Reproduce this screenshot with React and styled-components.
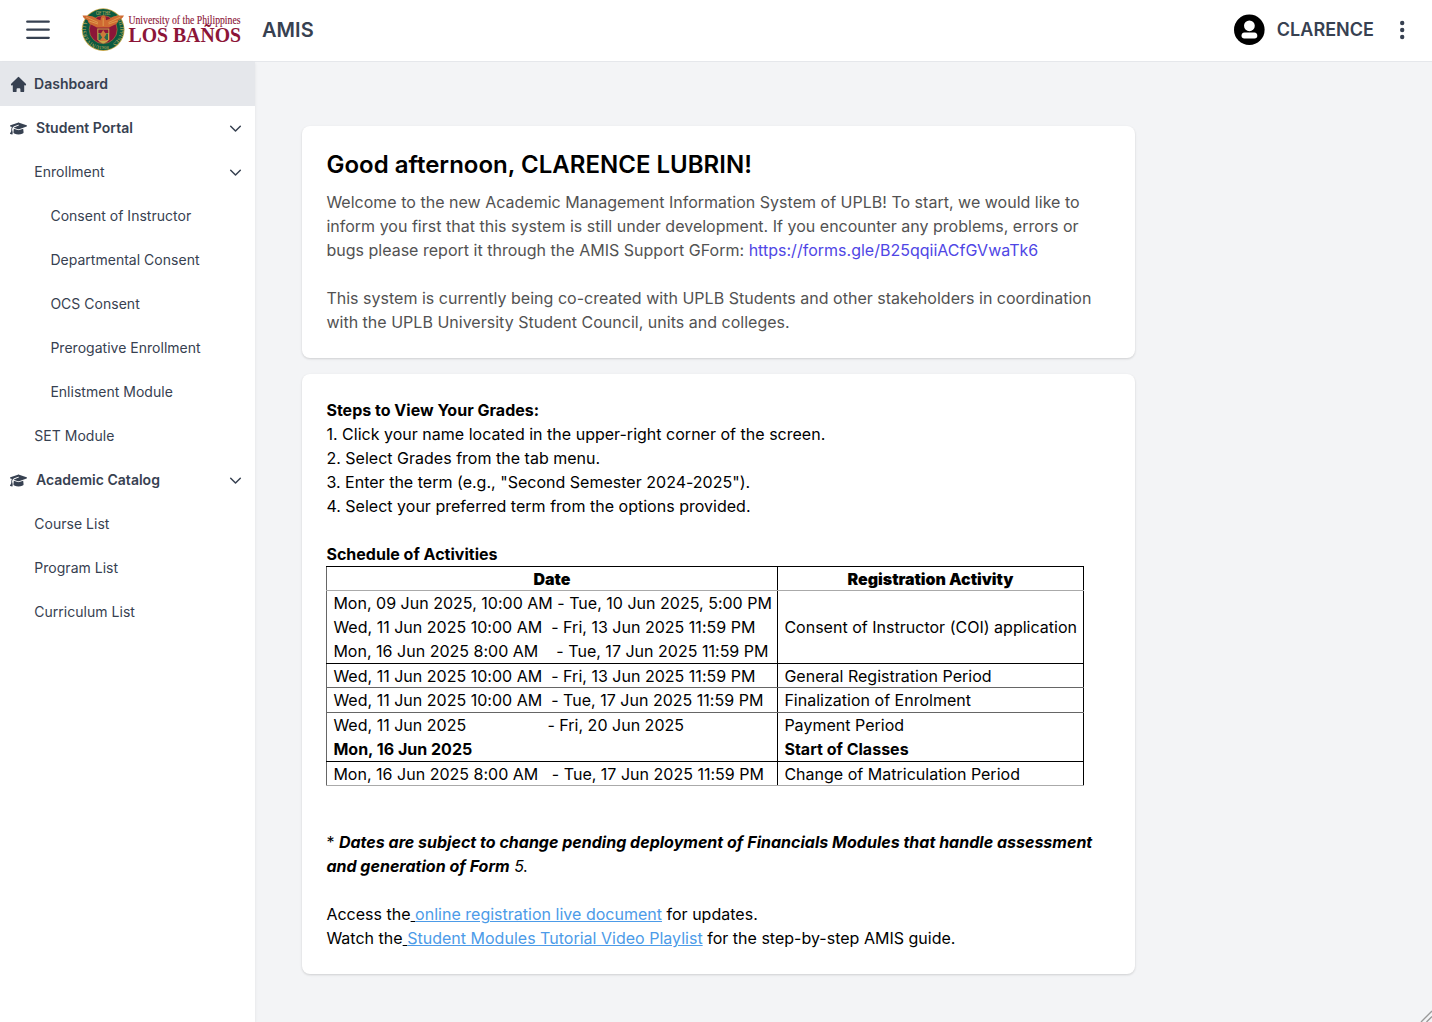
import React from 'react';
import styled, { createGlobalStyle } from 'styled-components';
import { FaGraduationCap } from 'react-icons/fa6';
import { HiHome } from 'react-icons/hi';

const GlobalStyle = createGlobalStyle`
  * { box-sizing: border-box; }
  body {
    margin: 0;
    font-family: Inter, "Liberation Sans", sans-serif;
    background: #f3f4f6;
    color: #000;
    overflow: hidden;
  }
`;

const Page = styled.div`
  display: flex;
  flex-direction: column;
  height: 1022px;
`;

const Header = styled.header`
  display: flex;
  align-items: center;
  flex: none;
  height: 62px;
  padding: 0 18px 2px 20px;
  background: #fff;
  border-bottom: 1px solid #e5e7eb;
  color: #374151;
`;

const MenuButton = styled.button`
  display: flex;
  padding: 0;
  border: 0;
  background: none;
  color: inherit;
`;

const Brand = styled.div`
  display: flex;
  margin-left: 24px;
`;

const AppName = styled.div`
  margin-left: 16px;
  font-size: 20px;
  font-weight: 600;
  line-height: 28px;
  letter-spacing: 0.05px;
`;

const Account = styled.div`
  display: flex;
  align-items: center;
  margin-left: auto;
  font-size: 18px;
  font-weight: 600;
  line-height: 28px;
`;

const AccountName = styled.span`
  margin: 0 16px 0 12px;
  padding-top: 1px;
  letter-spacing: 0.03px;
`;

const Body = styled.div`
  display: flex;
  flex: 1;
  min-height: 0;
`;

const Sidebar = styled.nav`
  flex: none;
  width: 255px;
  background: #fff;
  box-shadow: 0 1px 3px rgba(0, 0, 0, 0.08);
  color: #374151;
`;

const NavItem = styled.div`
  display: flex;
  align-items: center;
  height: 44px;
  padding: 0 12px 0 ${(p) => [8, 34.3, 50.4][p.$level]}px;
  background: ${(p) => (p.$active ? '#e5e7eb' : 'transparent')};
  font-size: 14px;
  font-weight: ${(p) => (p.$level === 0 ? 600 : 400)};
  line-height: 20px;
  letter-spacing: 0.02px;
`;

const NavIcon = styled.span`
  display: flex;
  justify-content: center;
  width: ${(p) => p.$width}px;
  margin-right: ${(p) => p.$gap}px;
`;

const NavLabel = styled.span`
  flex: 1;
`;

const Main = styled.main`
  flex: 1;
  display: flex;
  flex-direction: column;
  align-items: flex-start;
  gap: 16px;
  padding: 64px 0 0 47px;
`;

const Card = styled.section`
  width: 833px;
  height: ${(p) => p.$height}px;
  padding: ${(p) => p.$top}px 24px 0;
  background: #fff;
  border-radius: 8px;
  box-shadow: 0 1px 3px rgba(0, 0, 0, 0.1), 0 1px 2px rgba(0, 0, 0, 0.06);
  font-size: 16px;
  line-height: 24px;
  letter-spacing: 0.013px;
`;

const Greeting = styled.h1`
  margin: 0 0 9px;
  padding-left: 0.4px;
  font-size: 24px;
  font-weight: 600;
  line-height: 32px;
`;

const Paragraph = styled.p`
  margin: 0 0 ${(p) => p.$after || 0}px;
  padding-left: 0.4px;
  color: ${(p) => (p.$muted ? '#525252' : '#000')};
  white-space: nowrap;
`;

const FormLink = styled.a`
  color: #4f46e5;
`;

const DocLink = styled.a`
  color: #4c9be8;
  text-decoration: underline;
`;

const Table = styled.table`
  width: 758px;
  border-collapse: collapse;
  table-layout: fixed;
  margin-bottom: 44px;
`;

const Row = styled.tr`
  height: ${(p) => p.$height}px;

  > * {
    border: 1px solid #000;
    border-bottom-color: ${(p) => p.$rule};
  }
  > :first-child {
    border-left-color: #666;
    width: 451px;
  }
`;

const HeadCell = styled.th`
  padding: 0;
  font-weight: 900;
  line-height: 22px;
  letter-spacing: -0.03px;
`;

const Cell = styled.td`
  padding: ${(p) => (p.$lower ? 1 : 0)}px 6px 0 6.4px;
  line-height: ${(p) => (p.$lower ? 22 : 23)}px;
  white-space: pre;
`;

const Line = styled.div`
  height: 24px;
  line-height: ${(p) => p.$leading || 24}px;
  font-weight: ${(p) => (p.$bold ? 700 : 400)};
`;

const ResizeGrip = styled.svg`
  position: fixed;
  right: 0;
  bottom: 0;
`;

const MenuIcon = () => (
  <svg width="36" height="36" viewBox="0 0 36 36" fill="none" stroke="currentColor" strokeWidth="2.2" strokeLinecap="round">
    <path d="M27 10.500M7.200 9.700h21.600M7.200 17.700h21.600M7.200 25.800h21.600" />
  </svg>
);

const ChevronDown = () => (
  <svg width="15" height="15" viewBox="0 0 24 24" fill="none" stroke="currentColor" strokeWidth="2.4" strokeLinecap="round" strokeLinejoin="round">
    <path d="M4.300 8.300l7.700 7.700 7.700-7.700" />
  </svg>
);

const UserIcon = () => (
  <svg width="32" height="32" viewBox="0 0 32 32">
    <circle cx="16.3" cy="15.700" r="15.3" fill="#000" />
    <circle cx="16.4" cy="11.8" r="5.4" fill="#fff" />
    <path d="M11.500 18.600h9.800c2.100 0 3 1.400 3 3.200 0 1.700-1.100 2.700-2.700 2.700H11.200c-1.600 0-2.700-1-2.700-2.700 0-1.800.900-3.200 3-3.200z" fill="#fff" />
  </svg>
);

const MoreIcon = () => (
  <svg width="24" height="24" viewBox="0 0 24 24" fill="currentColor">
    <circle cx="12.200" cy="5" r="2.200" />
    <circle cx="12.200" cy="12" r="2.200" />
    <circle cx="12.200" cy="19" r="2.200" />
  </svg>
);

const Logo = () => (
  <svg width="166" height="44" viewBox="0 0 166 44">
    <defs>
      <path id="ringLeft" d="M20.500 38.300a17.200 17.200 0 0 1 -7.500 -31" />
      <path id="ringRight" d="M33 7.500a17.200 17.200 0 0 1 -7.500 31" />
    </defs>
    <circle cx="23.200" cy="21.600" r="21.300" fill="#c3a548" />
    <circle cx="23.200" cy="21.600" r="20.500" fill="#0b5a41" />
    <circle cx="23.200" cy="21.600" r="14" fill="#8c1538" stroke="#b99a3c" strokeWidth="0.500" />
    <g fill="#c6ae58" fontFamily="Liberation Serif, serif">
      <text x="16" y="6.600" fontSize="5.500" textLength="14.500" lengthAdjust="spacingAndGlyphs">OF THE</text>
      <text fontSize="5.800"><textPath href="#ringLeft" startOffset="1" textLength="31" lengthAdjust="spacingAndGlyphs">UNIVERSITY</textPath></text>
      <text fontSize="5.800"><textPath href="#ringRight" startOffset="2" textLength="31" lengthAdjust="spacingAndGlyphs">PHILIPPINES</textPath></text>
      <text x="18.700" y="40.700" fontSize="5">1908</text>
    </g>
    <path d="M2.500 7.500c5 0 11 0 14.500 3.500l3.500 1.200c0-2.800 1.200-4.700 3-4.700 1.900 0 2.600 1.800 2.400 4.700l3.600-1.200C33 7.500 38 7.500 44 7.500c-1.500 3-3.500 4-5.500 4.500-.5 3-2.500 4.500-4.500 5l-5 2.500h-12l-5-2.500c-2-.5-4-2-4.500-5-2-.5-4-1.500-5-4.500z" fill="#cf6a32" />
    <path d="M6 9l12 5.500M9 13l9 3M40.500 9l-12 5.500M37.500 13l-9 3M23.200 10v8" stroke="#dfa04f" strokeWidth="0.900" />
    <path d="M17.300 20.500h12v11c-1.500 2.500-4.200 3.500-6 4-1.800-.5-4.500-1.500-6-4z" fill="#c8a64a" />
    <path d="M18.300 21.500h10v3.500h-10z" fill="#8c1538" />
    <path d="M18.500 25.500h9.500v6.500h-9.500z" fill="#2a6b4b" />
    <path d="M23.200 22l3 4.500-2 3 3 3.500h-8l3-3.500-2-3z" fill="#cc7a3a" />
    <g fill="#8c1538" fontFamily="Liberation Serif, serif">
      <text x="48.500" y="15.800" fontSize="12" textLength="112" lengthAdjust="spacingAndGlyphs" stroke="#8c1538" strokeWidth="0.150">University of the Philippines</text>
      <text x="48.500" y="34.200" fontSize="20" fontWeight="700" textLength="112.500" lengthAdjust="spacingAndGlyphs">LOS BAÑOS</text>
    </g>
  </svg>
);

const homeIcon = <NavIcon $width={20} $gap={6}><HiHome size={19} /></NavIcon>;
const capIcon = <NavIcon $width={20} $gap={8}><FaGraduationCap size={17} /></NavIcon>;

const navigation = [
  { label: 'Dashboard', level: 0, icon: homeIcon, active: true },
  { label: 'Student Portal', level: 0, icon: capIcon, open: true },
  { label: 'Enrollment', level: 1, open: true },
  { label: 'Consent of Instructor', level: 2 },
  { label: 'Departmental Consent', level: 2 },
  { label: 'OCS Consent', level: 2 },
  { label: 'Prerogative Enrollment', level: 2 },
  { label: 'Enlistment Module', level: 2 },
  { label: 'SET Module', level: 1 },
  { label: 'Academic Catalog', level: 0, icon: capIcon, open: true },
  { label: 'Course List', level: 1 },
  { label: 'Program List', level: 1 },
  { label: 'Curriculum List', level: 1 },
];

const N = '\u00a0';

export default function App() {
  return (
    <>
      <GlobalStyle />
      <Page>
        <Header>
          <MenuButton aria-label="Menu"><MenuIcon /></MenuButton>
          <Brand><Logo /></Brand>
          <AppName>AMIS</AppName>
          <Account>
            <UserIcon />
            <AccountName>CLARENCE</AccountName>
            <MoreIcon />
          </Account>
        </Header>
        <Body>
          <Sidebar>
            {navigation.map((item) => (
              <NavItem key={item.label} $level={item.level} $active={item.active}>
                {item.icon}
                <NavLabel>{item.label}</NavLabel>
                {item.open && <ChevronDown />}
              </NavItem>
            ))}
          </Sidebar>
          <Main>
            <Card $height={232} $top={23}>
              <Greeting>Good afternoon, CLARENCE LUBRIN!</Greeting>
              <Paragraph $muted $after={24}>
                Welcome to the new Academic Management Information System of UPLB! To start, we would like to<br />
                inform you first that this system is still under development. If you encounter any problems, errors or<br />
                bugs please report it through the AMIS Support GForm: <FormLink>https://forms.gle/B25qqiiACfGVwaTk6</FormLink>
              </Paragraph>
              <Paragraph $muted>
                This system is currently being co-created with UPLB Students and other stakeholders in coordination<br />
                with the UPLB University Student Council, units and colleges.
              </Paragraph>
            </Card>
            <Card $height={600} $top={24}>
              <Paragraph $after={24}>
                <strong>Steps to View Your Grades:</strong><br />
                1. Click your name located in the upper-right corner of the screen.<br />
                2. Select Grades from the tab menu.<br />
                3. Enter the term (e.g., "Second Semester 2024-2025").<br />
                4. Select your preferred term from the options provided.
              </Paragraph>
              <Paragraph><strong>Schedule of Activities</strong></Paragraph>
              <Table>
                <tbody>
                  <Row $height={24} $rule="#aaa">
                    <HeadCell>Date</HeadCell>
                    <HeadCell>Registration Activity</HeadCell>
                  </Row>
                  <Row $height={73} $rule="#000">
                    <Cell>
                      <Line $leading={25}>Mon, 09 Jun 2025, 10:00 AM - Tue, 10 Jun 2025, 5:00 PM</Line>
                      <Line>Wed, 11 Jun 2025 10:00 AM{N} - Fri, 13 Jun 2025 11:59 PM</Line>
                      <Line>Mon, 16 Jun 2025 8:00 AM{N.repeat(3)} - Tue, 17 Jun 2025 11:59 PM</Line>
                    </Cell>
                    <Cell>Consent of Instructor (COI) application</Cell>
                  </Row>
                  <Row $height={24} $rule="#666">
                    <Cell $lower>Wed, 11 Jun 2025 10:00 AM{N} - Fri, 13 Jun 2025 11:59 PM</Cell>
                    <Cell $lower>General Registration Period</Cell>
                  </Row>
                  <Row $height={25} $rule="#666">
                    <Cell>Wed, 11 Jun 2025 10:00 AM{N} - Tue, 17 Jun 2025 11:59 PM</Cell>
                    <Cell>Finalization of Enrolment</Cell>
                  </Row>
                  <Row $height={49} $rule="#000">
                    <Cell>
                      <Line>Wed, 11 Jun 2025{N.repeat(17)} - Fri, 20 Jun 2025</Line>
                      <Line $bold>Mon, 16 Jun 2025</Line>
                    </Cell>
                    <Cell>
                      <Line>Payment Period</Line>
                      <Line $bold>Start of Classes</Line>
                    </Cell>
                  </Row>
                  <Row $height={24} $rule="#aaa">
                    <Cell $lower>Mon, 16 Jun 2025 8:00 AM{N.repeat(2)} - Tue, 17 Jun 2025 11:59 PM</Cell>
                    <Cell $lower>Change of Matriculation Period</Cell>
                  </Row>
                </tbody>
              </Table>
              <Paragraph $after={24}>
                * <strong><em>Dates are subject to change pending deployment of Financials Modules that handle assessment<br />
                and generation of Form</em></strong><em> 5.</em>
              </Paragraph>
              <Paragraph>
                Access the<u>{N}</u><DocLink>online registration live document</DocLink> for updates.<br />
                Watch the<u>{N}</u><DocLink>Student Modules Tutorial Video Playlist</DocLink> for the step-by-step AMIS guide.
              </Paragraph>
            </Card>
          </Main>
        </Body>
      </Page>
      <ResizeGrip width="12" height="12" viewBox="0 0 12 12" stroke="#999" strokeWidth="1.400" aria-hidden="true">
        <path d="M1 12L12 1M6.500 12L12 6.500" />
      </ResizeGrip>
    </>
  );
}
